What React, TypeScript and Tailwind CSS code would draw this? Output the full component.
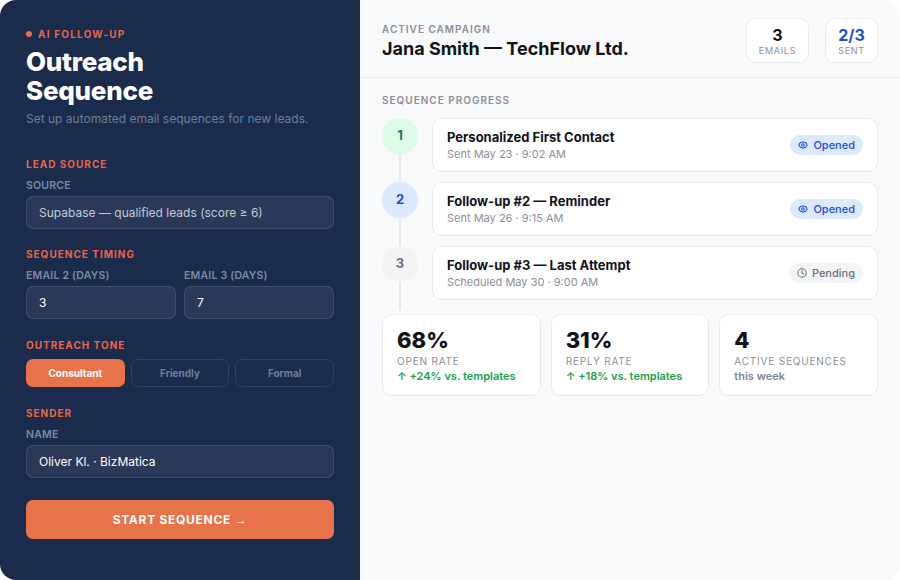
import { Clock, Eye } from "lucide-react";

function SectionLabel({ children, tight }: { children: React.ReactNode; tight?: boolean }) {
  return <div className={`${tight ? "mb-[8px]" : "mb-[9px]"} text-[10px] leading-[12px] font-bold tracking-[0.1em] text-[#e8654a] uppercase`}>{children}</div>;
}

function FieldLabel({ children }: { children: React.ReactNode }) {
  return <div className="mb-[4px] text-[10.5px] leading-[13px] font-semibold tracking-[0.02em] text-[#7a8aa3] uppercase">{children}</div>;
}

function Field({ value, className }: { value: string; className: string }) {
  return (
    <div className={`flex h-[33px] items-center rounded-[7px] border border-white/10 bg-white/[0.07] px-[12px] text-[12px] ${className}`}>
      {value}
    </div>
  );
}

function StatusPill({ status }: { status: "Opened" | "Pending" }) {
  const opened = status === "Opened";
  return (
    <span className={`flex h-[20px] items-center gap-[5px] rounded-full px-[8px] text-[11px] font-medium ${opened ? "bg-[#dbeafe] text-[#1d4ed8]" : "bg-[#f3f4f6] text-[#6b7280]"}`}>
      {opened ? <Eye size={10} strokeWidth={2.5} /> : <Clock size={10} strokeWidth={2.5} />}
      {status}
    </span>
  );
}

const steps = [
  { n: "1", title: "Personalized First Contact", meta: "Sent May 23 · 9:02 AM", status: "Opened" as const, circle: "bg-[#dcfce7] text-[#15803d]" },
  { n: "2", title: "Follow-up #2 — Reminder", meta: "Sent May 26 · 9:15 AM", status: "Opened" as const, circle: "bg-[#dbeafe] text-[#1d4ed8]" },
  { n: "3", title: "Follow-up #3 — Last Attempt", meta: "Scheduled May 30 · 9:00 AM", status: "Pending" as const, circle: "bg-[#f3f4f6] text-[#6b7280]" },
];

const stats = [
  { value: "68%", label: "Open rate", note: "↑ +24% vs. templates", noteClass: "text-[#16a34a]" },
  { value: "31%", label: "Reply rate", note: "↑ +18% vs. templates", noteClass: "text-[#16a34a]" },
  { value: "4", label: "Active sequences", note: "this week", noteClass: "text-[#7f858f]" },
];

export default function App() {
  return (
    <div className="flex h-[580px] w-[900px] bg-white font-['Inter',sans-serif]">
      {/* Left form panel */}
      <div className="flex w-[360px] shrink-0 flex-col rounded-l-[16px] bg-[#1a2b4b] px-[26px] pt-[28px]">
        <div className="flex items-center gap-[6px] text-[10px] leading-[12px] font-bold tracking-[0.12em] text-[#e8654a] uppercase">
          <span className="h-[6px] w-[6px] rounded-full bg-[#e8734a]" />
          AI Follow-up
        </div>
        <h1 className="mt-[7px] text-[26px] leading-[29px] font-extrabold tracking-[-0.01em] text-white">
          Outreach
          <br />
          Sequence
        </h1>
        <p className="mt-[5px] text-[12px] leading-[18px] text-[#6f7f98]">Set up automated email sequences for new leads.</p>

        <div className="mt-[30px]">
          <SectionLabel>Lead source</SectionLabel>
          <FieldLabel>Source</FieldLabel>
          <Field value="Supabase — qualified leads (score ≥ 6)" className="text-[#c3cbd8]" />
        </div>

        <div className="mt-[19px]">
          <SectionLabel>Sequence timing</SectionLabel>
          <div className="flex gap-[8px]">
            <div className="flex-1">
              <FieldLabel>Email 2 (days)</FieldLabel>
              <Field value="3" className="text-white" />
            </div>
            <div className="flex-1">
              <FieldLabel>Email 3 (days)</FieldLabel>
              <Field value="7" className="text-white" />
            </div>
          </div>
        </div>

        <div className="mt-[20px]">
          <SectionLabel tight>Outreach tone</SectionLabel>
          <div className="grid grid-cols-3 gap-[6px]">
            <div className="flex h-[28px] items-center justify-center rounded-[7px] bg-[#e8734a] text-[10px] font-bold text-white">Consultant</div>
            <div className="flex h-[28px] items-center justify-center rounded-[7px] border border-white/10 text-[10px] font-bold text-[#6f7f98]">Friendly</div>
            <div className="flex h-[28px] items-center justify-center rounded-[7px] border border-white/10 text-[10px] font-bold text-[#6f7f98]">Formal</div>
          </div>
        </div>

        <div className="mt-[20px]">
          <SectionLabel>Sender</SectionLabel>
          <FieldLabel>Name</FieldLabel>
          <Field value="Oliver Kl. · BizMatica" className="text-white" />
        </div>

        <button className="mt-[22px] flex h-[39px] w-full items-center justify-center rounded-[7px] bg-[#e8734a] text-[12px] font-bold tracking-[0.06em] text-white uppercase">
          Start sequence&nbsp;<span className="font-['Liberation_Sans',sans-serif] font-normal">→</span>
        </button>
      </div>

      {/* Right campaign panel */}
      <div className="flex min-w-0 flex-1 flex-col rounded-r-[16px] bg-[#f8f9fb]">
        <div className="flex h-[78px] items-center justify-between border-b border-[#e8eaef] px-[22px] pt-[4px]">
          <div className="pt-[2px]">
            <div className="text-[10px] leading-[12px] font-semibold tracking-[0.1em] text-[#8a8f98] uppercase">Active campaign</div>
            <div className="mt-[3px] text-[18px] leading-[22px] font-bold text-[#111318]">Jana Smith — TechFlow Ltd.</div>
          </div>
          <div className="flex gap-[16px]">
            <div className="flex h-[45px] w-[63px] flex-col items-center justify-center rounded-[10px] border border-[#e8eaef] bg-white">
              <div className="text-[16px] leading-[20px] font-bold text-[#111318]">3</div>
              <div className="text-[9px] leading-[11px] tracking-[0.08em] text-[#8a8f98] uppercase">Emails</div>
            </div>
            <div className="flex h-[45px] w-[53px] flex-col items-center justify-center rounded-[10px] border border-[#e8eaef] bg-white">
              <div className="text-[16px] leading-[20px] font-bold text-[#1d4ed8]">2/3</div>
              <div className="text-[9px] leading-[11px] tracking-[0.08em] text-[#8a8f98] uppercase">Sent</div>
            </div>
          </div>
        </div>

        <div className="flex flex-col px-[22px] pt-[16px]">
          <div className="mb-[12px] text-[10px] leading-[12px] font-semibold tracking-[0.1em] text-[#8a8f98] uppercase">Sequence progress</div>
          {steps.map((s) => (
            <div key={s.n} className="flex gap-[14px]">
              <div className="flex w-[36px] shrink-0 flex-col items-center">
                <div className={`flex h-[36px] w-[36px] items-center justify-center rounded-full text-[13px] font-bold ${s.circle}`}>{s.n}</div>
                <div className="w-[2px] flex-1 bg-[#e5e7eb]" />
              </div>
              <div className="mb-[10px] flex h-[54px] flex-1 items-center justify-between rounded-[10px] border border-[#e8eaef] bg-white pr-[14px] pl-[14px]">
                <div>
                  <div className="text-[13px] leading-[17px] font-bold text-[#111318]">{s.title}</div>
                  <div className="mt-[1px] text-[11px] leading-[15px] text-[#8a8f98]">{s.meta}</div>
                </div>
                <StatusPill status={s.status} />
              </div>
            </div>
          ))}
          <div className="mt-[4px] flex gap-[10px]">
            {stats.map((st) => (
              <div key={st.label} className="h-[82px] flex-1 rounded-[10px] border border-[#e8eaef] bg-white px-[14px] pt-[12px]">
                <div className="text-[22px] leading-[27px] font-extrabold text-[#111318]">{st.value}</div>
                <div className="mt-[1px] text-[10px] leading-[13px] tracking-[0.08em] text-[#8a8f98] uppercase">{st.label}</div>
                <div className={`mt-[1px] text-[11px] leading-[15px] font-semibold ${st.noteClass}`}>{st.note}</div>
              </div>
            ))}
          </div>
        </div>
      </div>
    </div>
  );
}
